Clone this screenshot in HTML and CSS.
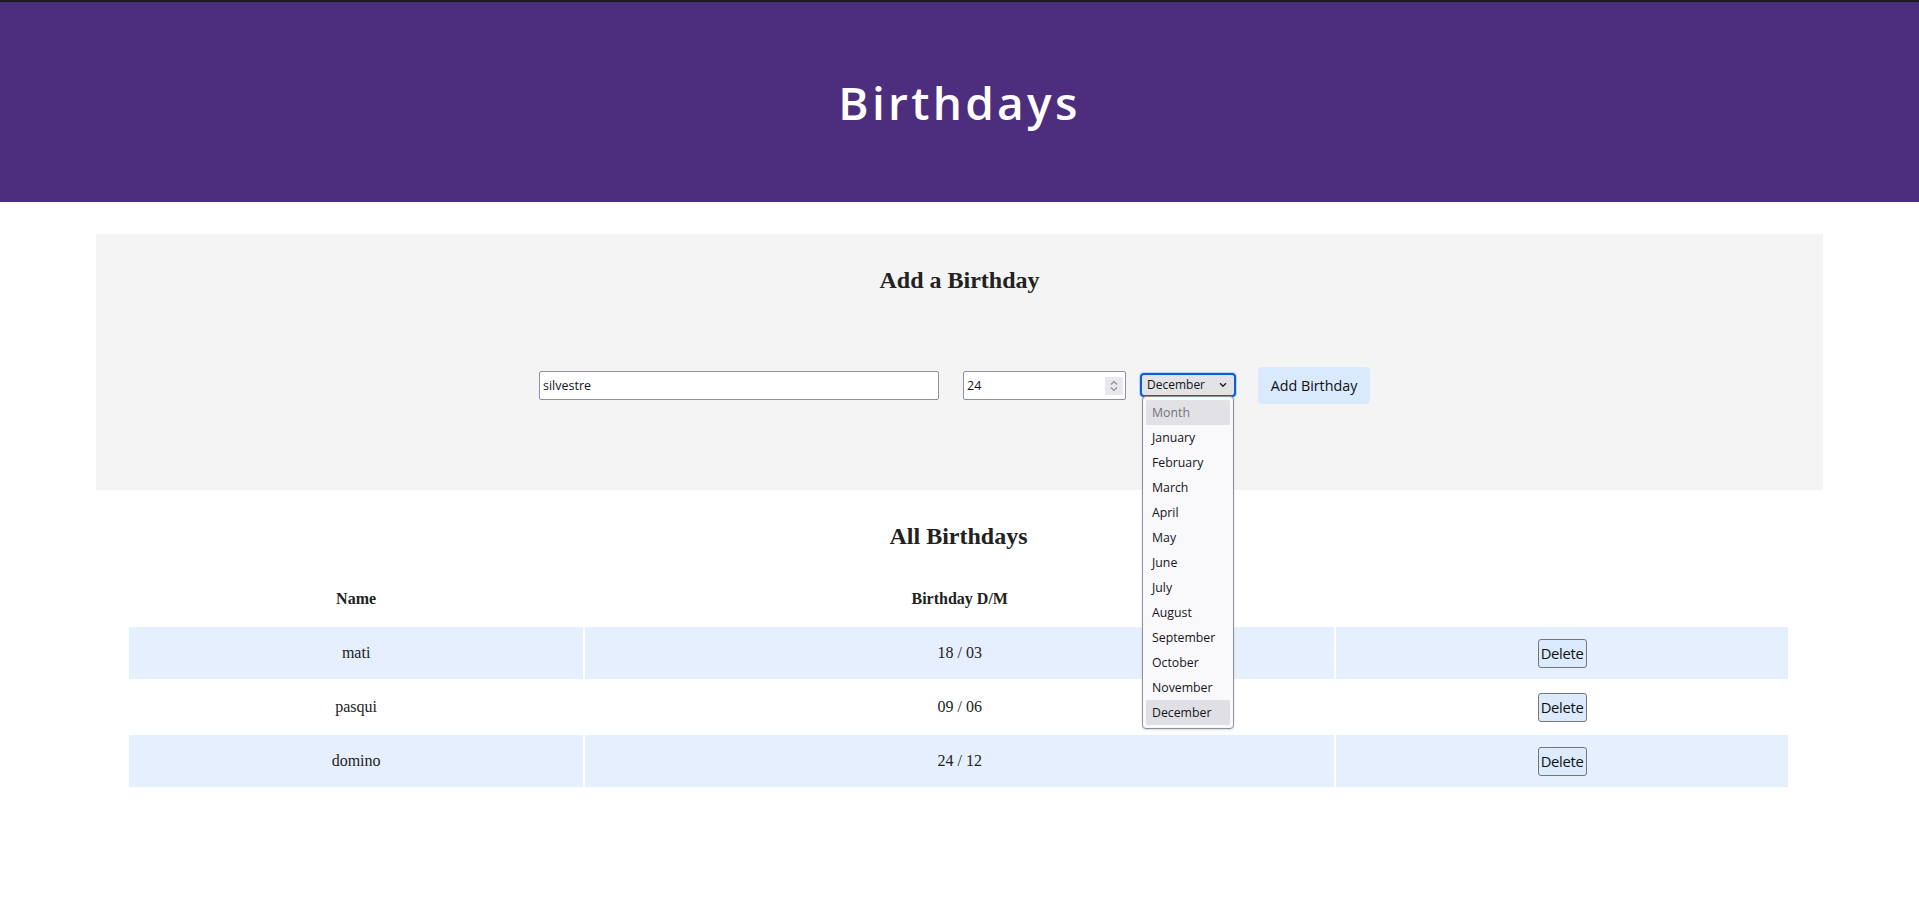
FILE: index.html
```html
<!DOCTYPE html>
<html lang="en">
<head>
<meta charset="utf-8">
<title>Birthdays</title>
<link rel="stylesheet" href="styles.css">
</head>
<body>
<header class="site-header">
  <h1 class="site-title">Birthdays</h1>
</header>
<main class="container">
  <section class="add-panel">
    <h2 class="section-title">Add a Birthday</h2>
    <form class="add-form">
      <input class="name-input" type="text" value="silvestre">
      <div class="num-field">
        <input class="num-input" type="text" value="24">
        <span class="spinner">
          <svg width="18" height="18" viewBox="0 0 18 18"><path d="M6 7.5 L9 4.5 L12 7.5" fill="none" stroke="#8f8f9d" stroke-width="1.2"/><path d="M6 10.5 L9 13.5 L12 10.5" fill="none" stroke="#8f8f9d" stroke-width="1.2"/></svg>
        </span>
      </div>
      <div class="select-wrap">
        <div class="select-box">
          <span class="select-value">December</span>
          <svg class="chev" width="8" height="6" viewBox="0 0 8 6"><path d="M1 1.2 L4 4.2 L7 1.2" fill="none" stroke="#222" stroke-width="1.4"/></svg>
        </div>
        <ul class="options">
          <li class="option placeholder">Month</li>
          <li class="option">January</li>
          <li class="option">February</li>
          <li class="option">March</li>
          <li class="option">April</li>
          <li class="option">May</li>
          <li class="option">June</li>
          <li class="option">July</li>
          <li class="option">August</li>
          <li class="option">September</li>
          <li class="option">October</li>
          <li class="option">November</li>
          <li class="option selected">December</li>
        </ul>
      </div>
      <button class="add-btn" type="button">Add Birthday</button>
    </form>
  </section>
  <section class="list-panel">
    <h2 class="section-title list-title">All Birthdays</h2>
    <table class="bday-table">
      <colgroup>
        <col class="col-name">
        <col class="col-date">
        <col class="col-action">
      </colgroup>
      <thead>
        <tr><th>Name</th><th>Birthday D/M</th><th></th></tr>
      </thead>
      <tbody>
        <tr class="shaded"><td>mati</td><td>18 / 03</td><td><button class="del-btn" type="button">Delete</button></td></tr>
        <tr><td>pasqui</td><td>09 / 06</td><td><button class="del-btn" type="button">Delete</button></td></tr>
        <tr class="shaded"><td>domino</td><td>24 / 12</td><td><button class="del-btn" type="button">Delete</button></td></tr>
      </tbody>
    </table>
  </section>
</main>
</body>
</html>
```
FILE: styles.css
```css
html, body {
  margin: 0;
  padding: 0;
  background: #ffffff;
}
body {
  font-family: "Liberation Serif", "Times New Roman", serif;
  color: #222;
}
.site-header {
  border-top: 2px solid #1d1b22;
  background: #4d2d7e;
  height: 200px;
  display: flex;
  align-items: center;
  justify-content: center;
}
.site-title {
  margin: 0;
  color: #ffffff;
  font-family: "Open Sans", "DejaVu Sans", sans-serif;
  font-weight: 600;
  font-size: 46px;
  letter-spacing: 3.3px;
  line-height: 1;
}
.container {
  width: 90%;
  margin: 32px auto 0;
}
.add-panel {
  background: #f4f4f4;
  padding: 32px 0 86px;
}
.section-title {
  margin: 0;
  text-align: center;
  font-family: "Liberation Serif", "Times New Roman", serif;
  font-weight: bold;
  font-size: 24px;
  line-height: 28px;
  color: #222;
}
.add-form {
  display: flex;
  align-items: center;
  justify-content: center;
  margin-top: 73px;
  padding-right: 10px;
  font-family: "Open Sans", "Noto Sans", sans-serif;
}
.name-input {
  box-sizing: border-box;
  width: 400px;
  height: 29px;
  border: 1px solid #8f8f9d;
  border-radius: 2px;
  padding: 0 3px;
  font-family: "Open Sans", "Noto Sans", sans-serif;
  font-size: 12.5px;
  color: #15141a;
  background: #fff;
  margin-right: 24px;
  outline: none;
}
.num-field {
  box-sizing: border-box;
  width: 163px;
  height: 29px;
  border: 1px solid #8f8f9d;
  border-radius: 2px;
  background: #fff;
  display: flex;
  align-items: center;
  padding: 0 2px 0 3px;
  margin-right: 14px;
}
.num-input {
  flex: 1;
  min-width: 0;
  border: none;
  padding: 0;
  font-family: "Open Sans", "Noto Sans", sans-serif;
  font-size: 12.5px;
  color: #15141a;
  background: transparent;
  outline: none;
}
.spinner {
  display: flex;
  width: 18px;
  height: 18px;
  background: #e9e9ed;
}
.select-wrap {
  position: relative;
  margin-right: 22px;
  margin-bottom: 2px;
}
.select-box {
  box-sizing: border-box;
  width: 96px;
  height: 24px;
  border: 2px solid #0b5fd8;
  border-radius: 4px;
  box-shadow: 0 0 0 1px #b9d2f4;
  background: #e2e2e7;
  display: flex;
  align-items: center;
  justify-content: space-between;
  padding: 0 7px 0 5px;
  font-size: 12px;
  color: #15141a;
}
.chev {
  display: block;
}
.options {
  position: absolute;
  top: 23px;
  left: 2px;
  box-sizing: border-box;
  width: 92px;
  margin: 0;
  padding: 3px;
  list-style: none;
  background: #f9f9fb;
  border: 1px solid #8f8f9d;
  border-radius: 4px;
  box-shadow: 0 1px 2px rgba(0,0,0,0.15);
  z-index: 5;
}
.option {
  height: 25px;
  line-height: 25px;
  padding: 0 6px;
  font-size: 12.3px;
  color: #15141a;
  border-radius: 2px;
  white-space: nowrap;
}
.option.placeholder {
  color: #74737d;
  background: #e1e1e6;
}
.option.selected {
  background: #dfdfe5;
}
.add-btn {
  box-sizing: border-box;
  width: 112px;
  height: 37px;
  border: none;
  border-radius: 4px;
  background: #d9eafc;
  font-family: "Open Sans", "Noto Sans", sans-serif;
  font-size: 14.3px;
  color: #111;
  padding: 0;
}
.list-panel {
  padding: 32px 33px 0 31px;
}
.list-title {
  margin-bottom: 21px;
}
.bday-table {
  width: 100%;
  table-layout: fixed;
  border-spacing: 2px;
  font-family: "Liberation Serif", "Times New Roman", serif;
  font-size: 16px;
  color: #222;
}
.col-name { width: 27.45%; }
.col-date { width: 45.25%; }
.col-action { width: 27.3%; }
.bday-table th,
.bday-table td {
  height: 52px;
  padding: 0;
  text-align: center;
  vertical-align: middle;
}
.bday-table th {
  font-weight: bold;
}
.shaded td {
  background: #e5effd;
}
.del-btn {
  box-sizing: border-box;
  height: 29px;
  padding: 0 2px;
  border: 1px solid #767676;
  border-radius: 3px;
  background: #dbebfd;
  font-family: "Open Sans", "Noto Sans", sans-serif;
  font-size: 14.8px;
  letter-spacing: -0.3px;
  color: #111;
}
```
